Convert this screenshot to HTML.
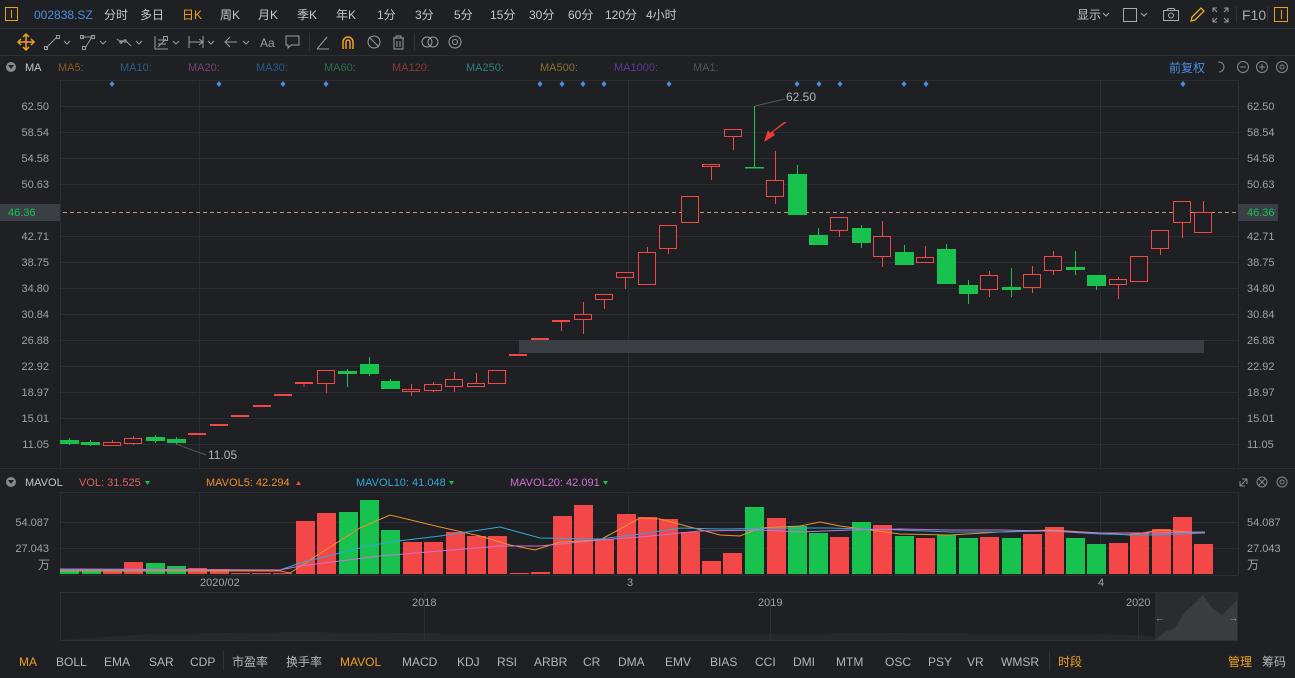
<!DOCTYPE html>
<html><head><meta charset="utf-8"><style>
html,body{margin:0;padding:0;background:#1e2023;}
svg{display:block;font-family:"Liberation Sans","Noto Sans CJK SC",sans-serif;}
</style></head><body>
<svg width="1295" height="678" viewBox="0 0 1295 678" xmlns="http://www.w3.org/2000/svg">
<rect width="1295" height="678" fill="#1e2023"/>
<!-- separators -->
<line x1="0" y1="28.5" x2="1295" y2="28.5" stroke="#2c2f34"/>
<line x1="0" y1="55.5" x2="1295" y2="55.5" stroke="#2c2f34"/>
<!-- top bar -->
<g font-size="12" fill="#c4c6ca">
<rect x="5.5" y="7.5" width="12" height="13" fill="none" stroke="#e8a020"/>
<line x1="11.5" y1="10" x2="11.5" y2="18" stroke="#e8a020"/>
<text x="34" y="19" fill="#4a8fe0">002838.SZ</text>
<text x="104" y="19">分时</text><text x="140" y="19">多日</text>
<text x="182" y="19" fill="#f0a020">日K</text>
<text x="220" y="19">周K</text><text x="258" y="19">月K</text><text x="297" y="19">季K</text>
<text x="336" y="19">年K</text><text x="377" y="19">1分</text><text x="415" y="19">3分</text>
<text x="454" y="19">5分</text><text x="490" y="19">15分</text><text x="529" y="19">30分</text>
<text x="568" y="19">60分</text><text x="605" y="19">120分</text><text x="646" y="19">4小时</text>
<text x="1077" y="19">显示</text>
<path d="M1103 13l3 3 3-3" fill="none" stroke="#aaa"/>
<rect x="1123.5" y="8.5" width="13" height="13" fill="none" stroke="#aaa"/>
<path d="M1141 13l3 3 3-3" fill="none" stroke="#aaa"/>
<rect x="1163.5" y="10.5" width="15" height="10" fill="none" stroke="#aaa"/><circle cx="1171" cy="15.5" r="2.5" fill="none" stroke="#aaa"/><path d="M1167 10.5l1-2h6l1 2" fill="none" stroke="#aaa"/>
<path d="M1191 21l1-4 9-9 3 3-9 9z" fill="none" stroke="#e8b020" stroke-width="1.3"/>
<path d="M1213 12v-4h4M1224 8h4v4M1228 18v4h-4M1217 22h-4v-4M1213 8l4 4M1228 8l-4 4M1228 22l-4-4M1213 22l4-4" fill="none" stroke="#999"/>
<line x1="1236.5" y1="6" x2="1236.5" y2="23" stroke="#333"/>
<text x="1242" y="20" font-size="14" fill="#aaa">F10</text>
<line x1="1267.5" y1="6" x2="1267.5" y2="23" stroke="#333"/>
<rect x="1274.5" y="7.5" width="13" height="14" fill="none" stroke="#e8a020"/><line x1="1281.5" y1="10" x2="1281.5" y2="19" stroke="#e8a020"/>
</g>
<!-- toolbar -->
<g fill="none" stroke="#9a9ca0" stroke-width="1">
<path d="M26 35v14M19 42h14M23 37l3-3 3 3M23 47l3 3 3-3M21 39l-3 3 3 3M31 39l3 3-3 3" stroke="#f0a020" stroke-width="1.5"/>
<path d="M46 48l11-11"/><rect x="44.5" y="46.5" width="3" height="3"/><rect x="56.5" y="35.5" width="3" height="3"/>
<path d="M64 41l3 3 3-3M100 41l3 3 3-3M136 41l3 3 3-3M173 41l3 3 3-3M208 41l3 3 3-3M243 41l3 3 3-3"/>
<path d="M82 37h10l-7 11"/><rect x="80.5" y="35.5" width="3" height="3"/><rect x="91.5" y="35.5" width="3" height="3"/><rect x="82.5" y="46.5" width="3" height="3"/>
<path d="M117 39l4 3 4-2 6 6"/><circle cx="121" cy="42" r="1.2"/><circle cx="125" cy="41" r="1.2"/>
<path d="M155 36v13h13M158 47l8-8M158 40h8M158 44h8"/><rect x="163.5" y="36.5" width="4" height="4"/>
<path d="M189 36v12M203 36v12M189 42h14M199 39l4 3-4 3"/>
<path d="M237 42h-12M230 37l-5 5 5 5"/>
<path d="M286 36h13v9h-8l-3 3v-3h-2z"/>
<path d="M317 49l10-12M317 49h12"/>
<path d="M343 49v-7a5 5 0 0 1 10 0v7M346 49v-7a2 2 0 0 1 4 0v7" stroke="#f0a020" stroke-width="1.5"/>
<circle cx="374" cy="42" r="6"/><path d="M369 37l10 10"/>
<path d="M393 38h11M396 38v-2h5v2M394 38v11h9v-11M397 41v6M400 41v6"/>
<circle cx="427" cy="42" r="5"/><circle cx="433" cy="42" r="5"/>
<circle cx="455" cy="42" r="6"/><circle cx="455" cy="42" r="2.5"/>
</g>
<g font-size="12" fill="#9a9ca0"><text x="260" y="47">Aa</text></g>
<line x1="309.5" y1="33" x2="309.5" y2="51" stroke="#333"/>
<line x1="414.5" y1="33" x2="414.5" y2="51" stroke="#333"/>
<!-- MA legend -->
<circle cx="11" cy="67" r="5" fill="#888"/><path d="M8 65h6l-3 4z" fill="#1e2023"/>
<g font-size="11">
<text x="25" y="71" fill="#c4c6ca">MA</text>
<text x="58" y="71" fill="#8a5a2a">MA5:</text>
<text x="120" y="71" fill="#2a5d8a">MA10:</text>
<text x="188" y="71" fill="#7a3f7a">MA20:</text>
<text x="256" y="71" fill="#2a5a8a">MA30:</text>
<text x="324" y="71" fill="#2f6e4e">MA60:</text>
<text x="392" y="71" fill="#8a3a3a">MA120:</text>
<text x="466" y="71" fill="#2a8080">MA250:</text>
<text x="540" y="71" fill="#8a7030">MA500:</text>
<text x="614" y="71" fill="#5a3a9a">MA1000:</text>
<text x="693" y="71" fill="#555">MA1:</text>
<text x="1169" y="72" font-size="12" fill="#4a8fe0">前复权</text>
</g>
<g fill="none" stroke="#888">
<path d="M1219 62a5 5 0 1 1 0 10M1219 62h-1"/>
<circle cx="1243" cy="67" r="5.5"/><path d="M1240 67h6"/>
<circle cx="1262" cy="67" r="5.5"/><path d="M1259 67h6M1262 64v6"/>
<circle cx="1282" cy="67" r="5.5"/><circle cx="1282" cy="67" r="2"/>
</g>
<!-- main chart frame -->
<g stroke="#2a2d31">
<line x1="60.5" y1="80" x2="60.5" y2="468"/>
<line x1="1238.5" y1="80" x2="1238.5" y2="468"/>
<line x1="60" y1="80.5" x2="1238" y2="80.5"/>
<line x1="0" y1="468.5" x2="1295" y2="468.5"/>
<line x1="199.5" y1="80" x2="199.5" y2="468"/>
<line x1="628.5" y1="80" x2="628.5" y2="468"/>
<line x1="1100.5" y1="80" x2="1100.5" y2="468"/>
<line x1="60" y1="106.5" x2="1238" y2="106.5"/><line x1="60" y1="132.5" x2="1238" y2="132.5"/>
<line x1="60" y1="158.5" x2="1238" y2="158.5"/><line x1="60" y1="184.5" x2="1238" y2="184.5"/>
<line x1="60" y1="236.5" x2="1238" y2="236.5"/><line x1="60" y1="262.5" x2="1238" y2="262.5"/>
<line x1="60" y1="288.5" x2="1238" y2="288.5"/><line x1="60" y1="314.5" x2="1238" y2="314.5"/>
<line x1="60" y1="340.5" x2="1238" y2="340.5"/><line x1="60" y1="366.5" x2="1238" y2="366.5"/>
<line x1="60" y1="392.5" x2="1238" y2="392.5"/><line x1="60" y1="418.5" x2="1238" y2="418.5"/>
<line x1="60" y1="444.5" x2="1238" y2="444.5"/>
</g>
<g font-size="11" fill="#a0a2a6">
<g text-anchor="end">
<text x="49" y="110">62.50</text><text x="49" y="136">58.54</text><text x="49" y="162">54.58</text>
<text x="49" y="188">50.63</text><text x="49" y="240">42.71</text><text x="49" y="266">38.75</text>
<text x="49" y="292">34.80</text><text x="49" y="318">30.84</text><text x="49" y="344">26.88</text>
<text x="49" y="370">22.92</text><text x="49" y="396">18.97</text><text x="49" y="422">15.01</text>
<text x="49" y="448">11.05</text>
</g>
<text x="1247" y="110">62.50</text><text x="1247" y="136">58.54</text><text x="1247" y="162">54.58</text>
<text x="1247" y="188">50.63</text><text x="1247" y="240">42.71</text><text x="1247" y="266">38.75</text>
<text x="1247" y="292">34.80</text><text x="1247" y="318">30.84</text><text x="1247" y="344">26.88</text>
<text x="1247" y="370">22.92</text><text x="1247" y="396">18.97</text><text x="1247" y="422">15.01</text>
<text x="1247" y="448">11.05</text>
</g>
<!-- diamonds -->
<g fill="#4a8fe0">
<path d="M112 81l2.5 3-2.5 3-2.5-3z"/><path d="M219 81l2.5 3-2.5 3-2.5-3z"/><path d="M283 81l2.5 3-2.5 3-2.5-3z"/>
<path d="M326 81l2.5 3-2.5 3-2.5-3z"/><path d="M540 81l2.5 3-2.5 3-2.5-3z"/><path d="M562 81l2.5 3-2.5 3-2.5-3z"/>
<path d="M583 81l2.5 3-2.5 3-2.5-3z"/><path d="M604 81l2.5 3-2.5 3-2.5-3z"/><path d="M669 81l2.5 3-2.5 3-2.5-3z"/>
<path d="M797 81l2.5 3-2.5 3-2.5-3z"/><path d="M819 81l2.5 3-2.5 3-2.5-3z"/><path d="M840 81l2.5 3-2.5 3-2.5-3z"/>
<path d="M904 81l2.5 3-2.5 3-2.5-3z"/><path d="M926 81l2.5 3-2.5 3-2.5-3z"/><path d="M1183 81l2.5 3-2.5 3-2.5-3z"/>
</g>
<!-- gray band -->
<rect x="519" y="340" width="685" height="13" fill="#3a3d44"/>
<!-- last price line -->
<line x1="0" y1="212.5" x2="1238" y2="212.5" stroke="#b89a78" stroke-dasharray="4,3"/>
<rect x="0" y="204" width="60" height="17" fill="#3a3f46"/>
<rect x="1238" y="204" width="40" height="17" fill="#3a3f46"/>
<text x="8" y="216" font-size="11" fill="#17c24f">46.36</text>
<text x="1247" y="216" font-size="11" fill="#17c24f">46.36</text>
<!-- candles -->
<g stroke-width="1">
<!-- green filled -->
<g fill="#17c24f" stroke="#17c24f">
<line x1="69.5" y1="438" x2="69.5" y2="445"/><rect x="60.5" y="440.5" width="18" height="3"/>
<line x1="90.5" y1="440" x2="90.5" y2="446"/><rect x="81.5" y="442.5" width="18" height="2"/>
<line x1="155.5" y1="435" x2="155.5" y2="443"/><rect x="146.5" y="437.5" width="18" height="3"/>
<line x1="176.5" y1="437" x2="176.5" y2="445"/><rect x="167.5" y="439.5" width="18" height="3"/>
<line x1="347.5" y1="369" x2="347.5" y2="387"/><rect x="338.5" y="371.5" width="18" height="2"/>
<line x1="369.5" y1="357" x2="369.5" y2="376"/><rect x="360.5" y="364.5" width="18" height="9"/>
<line x1="390.5" y1="379" x2="390.5" y2="389"/><rect x="381.5" y="381.5" width="18" height="7"/>
<line x1="754.5" y1="106" x2="754.5" y2="168"/><rect x="745.5" y="167.5" width="18" height="0.5"/>
<line x1="797.5" y1="165" x2="797.5" y2="215"/><rect x="788.5" y="174.5" width="18" height="40"/>
<line x1="818.5" y1="228" x2="818.5" y2="245"/><rect x="809.5" y="235.5" width="18" height="9"/>
<line x1="861.5" y1="225" x2="861.5" y2="248"/><rect x="852.5" y="228.5" width="18" height="14"/>
<line x1="904.5" y1="245" x2="904.5" y2="265"/><rect x="895.5" y="252.5" width="18" height="12"/>
<line x1="946.5" y1="244" x2="946.5" y2="284"/><rect x="937.5" y="249.5" width="18" height="34"/>
<line x1="968.5" y1="280" x2="968.5" y2="304"/><rect x="959.5" y="285.5" width="18" height="8"/>
<line x1="1011.5" y1="268" x2="1011.5" y2="297"/><rect x="1002.5" y="287.5" width="18" height="2"/>
<line x1="1075.5" y1="251" x2="1075.5" y2="275"/><rect x="1066.5" y="267.5" width="18" height="2"/>
<line x1="1096.5" y1="275" x2="1096.5" y2="290"/><rect x="1087.5" y="275.5" width="18" height="10"/>
</g>
<!-- red dashes -->
<g fill="#f04848" stroke="none">
<rect x="188" y="433" width="18" height="2"/><rect x="210" y="424" width="18" height="2"/>
<rect x="231" y="415" width="18" height="2"/><rect x="253" y="405" width="18" height="2"/>
<rect x="274" y="394" width="18" height="2"/><rect x="295" y="382" width="18" height="2"/><rect x="303.5" y="382" width="1" height="5"/>
<rect x="509" y="354" width="18" height="2"/><rect x="531" y="338" width="18" height="2"/>
<rect x="552" y="320" width="18" height="2"/><rect x="561" y="320" width="1" height="11"/>
</g>
<!-- red hollow -->
<g fill="#1e2023" stroke="#f04848">
<line x1="112.5" y1="440" x2="112.5" y2="446"/><rect x="103.5" y="442.5" width="17" height="3"/>
<line x1="133.5" y1="436" x2="133.5" y2="445"/><rect x="124.5" y="438.5" width="17" height="5"/>
<line x1="326.5" y1="370" x2="326.5" y2="393"/><rect x="317.5" y="370.5" width="17" height="13"/>
<line x1="411.5" y1="384" x2="411.5" y2="396"/><rect x="402.5" y="389.5" width="17" height="2"/>
<line x1="433.5" y1="382" x2="433.5" y2="392"/><rect x="424.5" y="384.5" width="17" height="6"/>
<line x1="454.5" y1="372" x2="454.5" y2="392"/><rect x="445.5" y="379.5" width="17" height="7"/>
<line x1="476.5" y1="373" x2="476.5" y2="387"/><rect x="467.5" y="383.5" width="17" height="3"/>
<rect x="488.5" y="370.5" width="17" height="13"/>
<line x1="583.5" y1="302" x2="583.5" y2="334"/><rect x="574.5" y="314.5" width="17" height="5"/>
<line x1="604.5" y1="294" x2="604.5" y2="309"/><rect x="595.5" y="294.5" width="17" height="5"/>
<line x1="625.5" y1="272" x2="625.5" y2="289"/><rect x="616.5" y="272.5" width="17" height="5"/>
<line x1="647.5" y1="247" x2="647.5" y2="285"/><rect x="638.5" y="252.5" width="17" height="32"/>
<line x1="668.5" y1="225" x2="668.5" y2="254"/><rect x="659.5" y="225.5" width="17" height="23"/>
<line x1="690.5" y1="196" x2="690.5" y2="223"/><rect x="681.5" y="196.5" width="17" height="26"/>
<line x1="711.5" y1="164" x2="711.5" y2="180"/><rect x="702.5" y="164.5" width="17" height="2"/>
<line x1="733.5" y1="129" x2="733.5" y2="150"/><rect x="724.5" y="129.5" width="17" height="7"/>
<line x1="775.5" y1="151" x2="775.5" y2="204"/><rect x="766.5" y="180.5" width="17" height="16"/>
<line x1="839.5" y1="217" x2="839.5" y2="237"/><rect x="830.5" y="217.5" width="17" height="13"/>
<line x1="882.5" y1="221" x2="882.5" y2="267"/><rect x="873.5" y="236.5" width="17" height="20"/>
<line x1="925.5" y1="246" x2="925.5" y2="263"/><rect x="916.5" y="257.5" width="17" height="5"/>
<line x1="989.5" y1="271" x2="989.5" y2="297"/><rect x="980.5" y="275.5" width="17" height="14"/>
<line x1="1032.5" y1="266" x2="1032.5" y2="293"/><rect x="1023.5" y="274.5" width="17" height="13"/>
<line x1="1053.5" y1="251" x2="1053.5" y2="275"/><rect x="1044.5" y="256.5" width="17" height="14"/>
<line x1="1118.5" y1="277" x2="1118.5" y2="299"/><rect x="1109.5" y="279.5" width="17" height="5"/>
<rect x="1130.5" y="256.5" width="17" height="25"/>
<line x1="1160.5" y1="230" x2="1160.5" y2="255"/><rect x="1151.5" y="230.5" width="17" height="18"/>
<line x1="1182.5" y1="201" x2="1182.5" y2="238"/><rect x="1173.5" y="201.5" width="17" height="21"/>
<line x1="1203.5" y1="201" x2="1203.5" y2="232"/><rect x="1194.5" y="212.5" width="17" height="20"/>
</g>
</g>
<!-- annotations -->
<line x1="755" y1="106" x2="785" y2="99" stroke="#555"/>
<text x="786" y="101" font-size="12" fill="#b0b2b6">62.50</text>
<line x1="176" y1="444" x2="206" y2="455" stroke="#555"/>
<text x="208" y="459" font-size="12" fill="#b0b2b6">11.05</text>
<path d="M787 122l-14 10 2 3-11 7 4-12 2 3 14-11z" fill="#f03c3c"/>
<!-- volume header -->
<circle cx="11" cy="482" r="5" fill="#888"/><path d="M8 480h6l-3 4z" fill="#1e2023"/>
<g font-size="11">
<text x="25" y="486" fill="#c4c6ca">MAVOL</text>
<text x="79" y="486" fill="#e06060">VOL: 31.525</text><path d="M145 481h5l-2.5 4z" fill="#17c24f"/>
<text x="206" y="486" fill="#f0902a">MAVOL5: 42.294</text><path d="M296 485h5l-2.5-4z" fill="#f04848"/>
<text x="356" y="486" fill="#30a8d8">MAVOL10: 41.048</text><path d="M449 481h5l-2.5 4z" fill="#17c24f"/>
<text x="510" y="486" fill="#d070d0">MAVOL20: 42.091</text><path d="M603 481h5l-2.5 4z" fill="#17c24f"/>
</g>
<path d="M1240 486l7-7M1240 481v5h5M1247 484v-5h-5" fill="none" stroke="#888"/>
<circle cx="1262" cy="482" r="5" fill="none" stroke="#888"/><path d="M1259 479l6 6M1265 479l-6 6" stroke="#888"/>
<circle cx="1282" cy="482" r="5" fill="none" stroke="#888"/><circle cx="1282" cy="482" r="2" fill="none" stroke="#888"/>
<!-- volume grid -->
<g stroke="#2a2d31">
<line x1="60.5" y1="492" x2="60.5" y2="575"/><line x1="1238.5" y1="492" x2="1238.5" y2="575"/>
<line x1="60" y1="492.5" x2="1238" y2="492.5"/>
<line x1="60" y1="522.5" x2="1238" y2="522.5"/><line x1="60" y1="548.5" x2="1238" y2="548.5"/>
<line x1="199.5" y1="492" x2="199.5" y2="575"/><line x1="628.5" y1="492" x2="628.5" y2="575"/><line x1="1100.5" y1="492" x2="1100.5" y2="575"/>
<line x1="60" y1="575.5" x2="1238" y2="575.5"/>
</g>
<g font-size="11" fill="#a0a2a6">
<text x="49" y="526" text-anchor="end">54.087</text><text x="49" y="552" text-anchor="end">27.043</text>
<text x="38" y="569" font-size="12">万</text>
<text x="1247" y="526">54.087</text><text x="1247" y="552">27.043</text>
<text x="1247" y="569" font-size="12">万</text>
</g>
<!-- volume bars -->
<g fill="#17c24f">
<rect x="60" y="571" width="19" height="3"/><rect x="82" y="571" width="19" height="3"/>
<rect x="146" y="563" width="19" height="11"/><rect x="167" y="566" width="19" height="8"/>
<rect x="339" y="512" width="19" height="62"/><rect x="360" y="500" width="19" height="74"/>
<rect x="381" y="530" width="19" height="44"/>
<rect x="745" y="507" width="19" height="67"/><rect x="788" y="526" width="19" height="48"/>
<rect x="809" y="533" width="19" height="41"/><rect x="852" y="522" width="19" height="52"/>
<rect x="895" y="536" width="19" height="38"/><rect x="937" y="535" width="19" height="39"/>
<rect x="959" y="538" width="19" height="36"/><rect x="1002" y="538" width="19" height="36"/>
<rect x="1066" y="538" width="19" height="36"/><rect x="1087" y="544" width="19" height="30"/>
</g>
<g fill="#f44848">
<rect x="103" y="571" width="19" height="3"/><rect x="124" y="562" width="19" height="12"/>
<rect x="188" y="568" width="19" height="6"/><rect x="210" y="569" width="19" height="5"/>
<rect x="231" y="573" width="19" height="1"/><rect x="252" y="573" width="19" height="1"/><rect x="273" y="573" width="19" height="1"/>
<rect x="296" y="521" width="19" height="53"/><rect x="317" y="513" width="19" height="61"/>
<rect x="403" y="542" width="19" height="32"/><rect x="424" y="542" width="19" height="32"/>
<rect x="446" y="532" width="19" height="42"/><rect x="467" y="536" width="19" height="38"/>
<rect x="488" y="536" width="19" height="38"/><rect x="510" y="573" width="19" height="1"/>
<rect x="531" y="572" width="19" height="2"/><rect x="553" y="516" width="19" height="58"/>
<rect x="574" y="505" width="19" height="69"/><rect x="595" y="539" width="19" height="35"/>
<rect x="617" y="514" width="19" height="60"/><rect x="638" y="517" width="19" height="57"/>
<rect x="659" y="519" width="19" height="55"/><rect x="681" y="532" width="19" height="42"/>
<rect x="702" y="561" width="19" height="13"/><rect x="723" y="553" width="19" height="21"/>
<rect x="767" y="518" width="19" height="56"/><rect x="830" y="537" width="19" height="37"/>
<rect x="873" y="525" width="19" height="49"/><rect x="916" y="538" width="19" height="36"/>
<rect x="980" y="537" width="19" height="37"/><rect x="1023" y="534" width="19" height="40"/>
<rect x="1045" y="527" width="19" height="47"/><rect x="1109" y="543" width="19" height="31"/>
<rect x="1130" y="533" width="19" height="41"/><rect x="1152" y="529" width="19" height="45"/>
<rect x="1173" y="517" width="19" height="57"/><rect x="1194" y="544" width="19" height="30"/>
</g>
<!-- MA lines on volume -->
<g fill="none" stroke-width="1">
<polyline stroke="#f0902a" points="60,571 280,571 290,573 330,547 360,528 390,515 440,527 480,536 510,545 535,550 560,542 600,540 640,518 660,519 690,527 720,535 740,536 760,528 800,526 820,522 840,526 870,530 900,534 950,535 1000,532 1050,530 1100,533 1130,535 1160,530 1205,533"/>
<polyline stroke="#30a8d8" points="60,570 280,570 300,563 360,548 390,542 440,536 500,527 540,538 600,539 640,534 680,528 720,529 800,528 830,528 900,530 950,532 1000,532 1050,531 1100,534 1150,535 1205,533"/>
<polyline stroke="#d070d0" points="60,569 280,570 300,566 380,556 440,551 500,546 540,546 600,540 640,537 700,531 760,530 800,532 850,530 900,529 950,530 1000,530 1050,531 1100,533 1150,533 1205,532"/>
</g>
<!-- date axis -->
<g font-size="11" fill="#a0a2a6">
<text x="200" y="586">2020/02</text><text x="627" y="586">3</text><text x="1098" y="586">4</text>
</g>
<!-- navigator -->
<rect x="60.5" y="592.5" width="1177" height="48" fill="#1e2023" stroke="#2c2f34"/>
<rect x="1155" y="593" width="82" height="47" fill="#2a2c30"/>
<path d="M1155 640 L1165 632 L1175 628 L1185 612 L1195 603 L1203 595 L1212 608 L1222 615 L1232 605 L1237 600 L1237 640Z" fill="#3a3c40"/>
<path d="M61 640 L150 634 L300 632 L500 634 L700 634 L900 633 L1100 634 L1155 636 L1155 640 L61 640Z" fill="#26282c"/>
<g stroke="#2c2f34"><line x1="424.5" y1="593" x2="424.5" y2="640"/><line x1="770.5" y1="593" x2="770.5" y2="640"/><line x1="1138.5" y1="593" x2="1138.5" y2="640"/></g>
<g font-size="11" fill="#a0a2a6"><text x="412" y="606">2018</text><text x="758" y="606">2019</text><text x="1126" y="606">2020</text></g>
<text x="1155" y="621" font-size="9" fill="#aaa">←</text><text x="1229" y="621" font-size="9" fill="#aaa">→</text>
<!-- bottom bar -->
<g font-size="12" fill="#b4b6ba">
<text x="19" y="666" fill="#f0a020">MA</text><text x="56" y="666">BOLL</text><text x="104" y="666">EMA</text>
<text x="149" y="666">SAR</text><text x="190" y="666">CDP</text>
<text x="232" y="666">市盈率</text><text x="286" y="666">换手率</text>
<text x="340" y="666" fill="#f0a020">MAVOL</text><text x="402" y="666">MACD</text><text x="457" y="666">KDJ</text>
<text x="497" y="666">RSI</text><text x="534" y="666">ARBR</text><text x="583" y="666">CR</text>
<text x="618" y="666">DMA</text><text x="665" y="666">EMV</text><text x="710" y="666">BIAS</text>
<text x="755" y="666">CCI</text><text x="793" y="666">DMI</text><text x="836" y="666">MTM</text>
<text x="885" y="666">OSC</text><text x="928" y="666">PSY</text><text x="967" y="666">VR</text>
<text x="1001" y="666">WMSR</text><text x="1058" y="666" fill="#f0a020">时段</text>
<text x="1228" y="666" fill="#f0a020">管理</text><text x="1262" y="666">筹码</text>
</g>
<line x1="223.5" y1="651" x2="223.5" y2="671" stroke="#333"/>
<line x1="1049.5" y1="651" x2="1049.5" y2="671" stroke="#333"/>
</svg>
</body></html>
